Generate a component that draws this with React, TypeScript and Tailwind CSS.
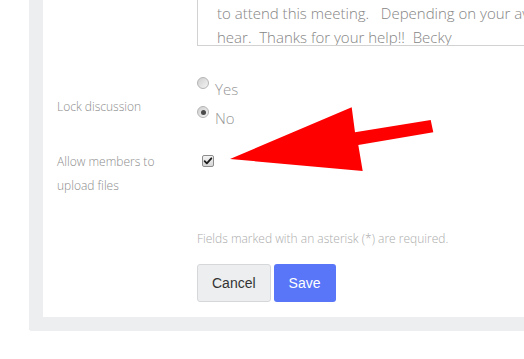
import React from "react";

const sans = "font-['Open_Sans',_'Liberation_Sans',_sans-serif]";

function Radio({ checked }: { checked?: boolean }) {
  return (
    <span className="flex h-[12px] w-[12px] shrink-0 items-center justify-center rounded-full border border-[#b4b4b4] bg-linear-to-br from-[#cfcfcf] to-[#f4f4f4]">
      {checked && <span className="h-[5px] w-[5px] rounded-full bg-[#4a4a4a]" />}
    </span>
  );
}

function Checkbox() {
  return (
    <span className="flex h-[12px] w-[12px] items-center justify-center rounded-[2px] border border-[#8d8d8d] bg-linear-to-b from-[#f4f4f4] to-[#d6d6d6]">
      <svg viewBox="0 0 12 12" className="h-[10px] w-[10px]">
        <path d="M2 6.2 L4.6 8.8 L10 2.8" fill="none" stroke="#1e1e1e" strokeWidth="2.2" strokeLinecap="round" strokeLinejoin="round" />
      </svg>
    </span>
  );
}

export default function App() {
  return (
    <div className={`relative h-[359px] w-[524px] overflow-hidden bg-white font-light ${sans}`}>
      <div className="ml-[29px] h-[331px] rounded-bl-[3px] border-b-[14px] border-l-[14px] border-[#eceeef] bg-white pl-[14px]">
        <div className="grid grid-cols-[140px_1fr]">
          {/* textarea, top cut off */}
          <div />
          <div className="h-[46px] overflow-hidden border-b border-l border-[#d2d2d2] pl-[19px] pt-[1px] text-[15px] leading-[24px] text-[#858585] whitespace-pre">
            <div>to attend this meeting.   Depending on your availability</div>
            <div>hear.  Thanks for your help!!  Becky</div>
          </div>

          {/* lock discussion */}
          <div className="mt-[49px] text-[12px] leading-[24px] text-[#8c8c8c]">Lock discussion</div>
          <div className="mt-[31px] text-[15px] leading-[20px] text-[#969696]">
            <div className="flex h-[29px] items-start gap-[6px]">
              <Radio />
              <span className="mt-[2px]">Yes</span>
            </div>
            <div className="flex h-[29px] items-start gap-[6px]">
              <Radio checked />
              <span className="mt-[2px]">No</span>
            </div>
          </div>

          {/* upload files */}
          <div className="mt-[15px] pr-[20px] text-[12px] leading-[24px] text-[#8c8c8c]">
            Allow members to upload files
          </div>
          <div className="mt-[20px] pl-[5px]">
            <Checkbox />
          </div>

          <div />
          <div className="mt-[32px] text-[12px] leading-[18px] text-[#ababab]">
            Fields marked with an asterisk (*) are required.
          </div>

          <div />
          <div className="mt-[16px] flex gap-[3px] font-['Liberation_Sans',_Arial,_sans-serif] text-[14px] font-normal">
            <button className="h-[38px] rounded-[3px] border border-[#d5d8da] bg-[#eceeef] px-[14px] text-[#333]">
              Cancel
            </button>
            <button className="h-[38px] rounded-[3px] bg-[#5876f7] px-[15px] text-white">Save</button>
          </div>
        </div>
      </div>

      {/* annotation arrow */}
      <svg className="pointer-events-none absolute left-0 top-0" width="524" height="359" viewBox="0 0 524 359">
        <polygon
          points="230,159 351.7,107.3 355,132.3 430.7,120 433.3,132.3 358.3,145 362.7,171"
          fill="#ff0000"
        />
      </svg>
    </div>
  );
}
